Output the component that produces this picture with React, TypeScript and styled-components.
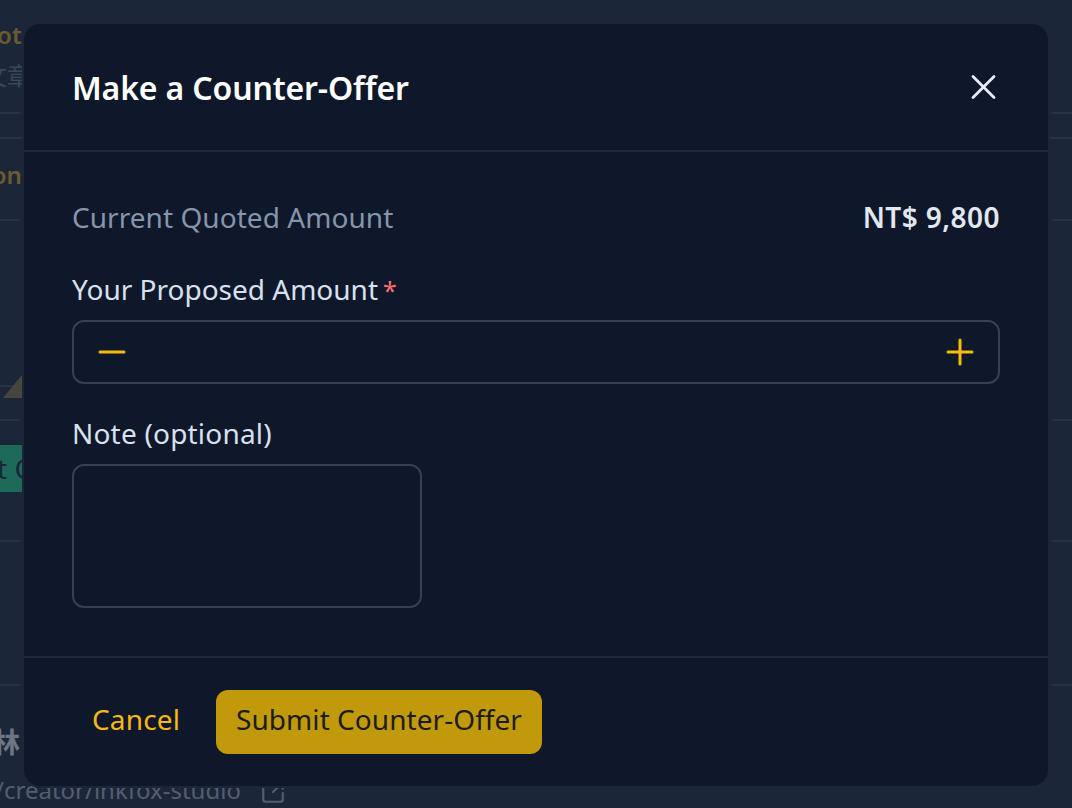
import React from "react";
import styled, { createGlobalStyle } from "styled-components";
import { SquareArrowOutUpRight } from "lucide-react";

const Global = createGlobalStyle`
  html, body { margin: 0; padding: 0; background: #273548; }
  * { box-sizing: border-box; }
  body { font-family: "Noto Sans", "Noto Sans CJK TC", sans-serif; }
`;

const Page = styled.div`
  position: relative;
  width: 1072px;
  height: 808px;
  overflow: hidden;
  background: #273548;
  display: flex;
  flex-direction: column;
`;

const Section = styled.section<{ $h: number; $full?: boolean }>`
  height: ${(p) => p.$h}px;
  flex: none;
  display: flex;
  flex-direction: column;
  border-bottom: ${(p) => (p.$full ? "2px solid #3d4c60" : "none")};
`;

/* Rows whose divider stops short of the panel that sits above the page */
const Row = styled.div<{ $h: number }>`
  height: ${(p) => p.$h}px;
  flex: none;
  display: flex;
  flex-direction: column;
  background: linear-gradient(to right, #3d4c60 20px, transparent 20px, transparent 1052px, #3d4c60 1052px)
    bottom / 100% 2px no-repeat;
`;

const PeekTitle = styled.div<{ $top: number; $shift: number }>`
  margin: ${(p) => p.$top}px 0 0 ${(p) => p.$shift}px;
  font-size: 24px;
  line-height: 32px;
  font-weight: 600;
  color: #c79d36;
  white-space: nowrap;
`;

const PeekSub = styled.div`
  margin: 9px 0 0 -17px;
  font-size: 24px;
  line-height: 32px;
  color: #64748b;
  white-space: nowrap;
`;

const PeekChart = styled.svg`
  display: block;
  margin-top: 152px;
`;

const PeekButton = styled.div`
  margin-top: 24px;
  width: 24px;
  height: 47px;
  background: #2dbd86;
  color: #273548;
  font-size: 28px;
  line-height: 47px;
  text-indent: -3px;
  white-space: nowrap;
  overflow: hidden;
`;

const PeekName = styled.div`
  margin: 38px 0 0 -8px;
  font-size: 28px;
  line-height: 36px;
  font-weight: 600;
  color: #cbd5e1;
`;

const PeekLink = styled.div`
  margin: 14px 0 0 -5px;
  display: flex;
  align-items: center;
  gap: 19px;
  font-size: 24px;
  line-height: 32px;
  color: #94a3b8;
  white-space: nowrap;
  svg { flex: none; margin-top: 3px; }
`;

const Overlay = styled.div`
  position: absolute;
  inset: 0;
  padding: 24px 24px 22px;
  display: flex;
  background: rgba(15, 23, 42, 0.5);
`;

const Modal = styled.div`
  flex: 1;
  display: flex;
  flex-direction: column;
  background: #0f172a;
  border-radius: 16px;
  box-shadow: 0 0 0 2px #1b2639;
  font-family: "Noto Sans", sans-serif;
`;

const Header = styled.header`
  height: 128px;
  flex: none;
  padding: 0 48px;
  display: flex;
  align-items: center;
  justify-content: space-between;
  border-bottom: 2px solid #1e293b;
`;

const Title = styled.h2`
  margin: 0;
  padding-top: 2px;
  font-size: 32px;
  line-height: 40px;
  font-weight: 600;
  letter-spacing: -0.15px;
  color: #ffffff;
`;

const CloseButton = styled.button`
  width: 32px;
  height: 32px;
  padding: 0;
  border: 0;
  background: none;
  display: flex;
  align-items: center;
  justify-content: center;
  color: #e8eef6;
`;

const Body = styled.div`
  flex: 1;
  padding: 48px;
  display: flex;
  flex-direction: column;
`;

const QuoteRow = styled.div`
  display: flex;
  justify-content: space-between;
  align-items: center;
  height: 36px;
  padding-bottom: 2px;
  margin-bottom: 36px;
`;

const QuoteLabel = styled.span`
  font-size: 28px;
  letter-spacing: 0.05px;
  color: #8595ab;
`;

const QuoteValue = styled.span`
  font-size: 28px;
  font-weight: 600;
  letter-spacing: 0.45px;
  color: #e2e8f0;
`;

const Label = styled.label<{ $spread?: boolean }>`
  display: block;
  height: 36px;
  font-size: 28px;
  line-height: 34px;
  letter-spacing: ${(p) => (p.$spread ? "0.2px" : "0")};
  color: #d8e1ed;
  margin-bottom: 12px;
`;

const Required = styled.span`
  color: #f87171;
  margin-left: 5px;
  font-size: 25px;
`;

const Stepper = styled.div`
  height: 64px;
  border: 2px solid #334155;
  border-radius: 12px;
  padding: 0 24px;
  display: flex;
  align-items: center;
  justify-content: space-between;
  margin-bottom: 32px;
  color: #fbb90f;
`;

const Note = styled.div`
  width: 350px;
  height: 144px;
  border: 2px solid #334155;
  border-radius: 12px;
`;

const Footer = styled.footer`
  flex: none;
  padding: 32px 48px;
  display: flex;
  align-items: center;
  gap: 16px;
  border-top: 2px solid #1e293b;
`;

const TextButton = styled.button`
  height: 64px;
  padding: 0 20px 6px;
  border: 0;
  background: none;
  font: inherit;
  font-size: 28px;
  letter-spacing: 0.15px;
  color: #f8b815;
`;

const SubmitButton = styled.button`
  height: 64px;
  padding: 0 20px 6px;
  border: 0;
  border-radius: 12px;
  background: #c09a0a;
  font: inherit;
  font-size: 28px;
  letter-spacing: 0.05px;
  color: #1c1c1c;
`;

export default function App() {
  return (
    <>
      <Global />
      <Page>
        <Row $h={114}>
          <PeekTitle $top={19} $shift={-33}>Photo</PeekTitle>
          <PeekSub>文章</PeekSub>
        </Row>
        <Section $h={25} $full />
        <Row $h={82}>
          <PeekTitle $top={20} $shift={-24}>Bond</PeekTitle>
        </Row>
        <Row $h={200}>
          <PeekChart width="22" height="26" viewBox="0 0 22 26">
            <path d="M0 13 H22" stroke="#3d4c60" strokeWidth="2" />
            <path d="M3 25 L22 2 V25 Z" fill="#7d7550" />
          </PeekChart>
        </Row>
        <Row $h={121}>
          <PeekButton>t C</PeekButton>
        </Row>
        <Row $h={144} />
        <Section $h={122}>
          <PeekName>林</PeekName>
          <PeekLink>
            /creator/inkfox-studio
            <SquareArrowOutUpRight size={26} strokeWidth={2} />
          </PeekLink>
        </Section>
        <Overlay>
          <Modal>
            <Header>
              <Title>Make a Counter-Offer</Title>
              <CloseButton aria-label="Close">
                <svg width="28" height="28" viewBox="0 0 28 28" fill="none" stroke="currentColor" strokeWidth="2.8" strokeLinecap="round">
                  <path d="M3 3.5 L24 24.5 M24 3.5 L3 24.5" />
                </svg>
              </CloseButton>
            </Header>
            <Body>
              <QuoteRow>
                <QuoteLabel>Current Quoted Amount</QuoteLabel>
                <QuoteValue>NT$ 9,800</QuoteValue>
              </QuoteRow>
              <Label>
                Your Proposed Amount<Required>*</Required>
              </Label>
              <Stepper>
                <svg width="28" height="28" viewBox="0 0 28 28" fill="none" stroke="currentColor" strokeWidth="3" strokeLinecap="round">
                  <path d="M2 14 H26" />
                </svg>
                <svg width="28" height="28" viewBox="0 0 28 28" fill="none" stroke="currentColor" strokeWidth="3" strokeLinecap="round">
                  <path d="M2 14 H26 M14 2 V26" />
                </svg>
              </Stepper>
              <Label $spread>Note (optional)</Label>
              <Note />
            </Body>
            <Footer>
              <TextButton>Cancel</TextButton>
              <SubmitButton>Submit Counter-Offer</SubmitButton>
            </Footer>
          </Modal>
        </Overlay>
      </Page>
    </>
  );
}
